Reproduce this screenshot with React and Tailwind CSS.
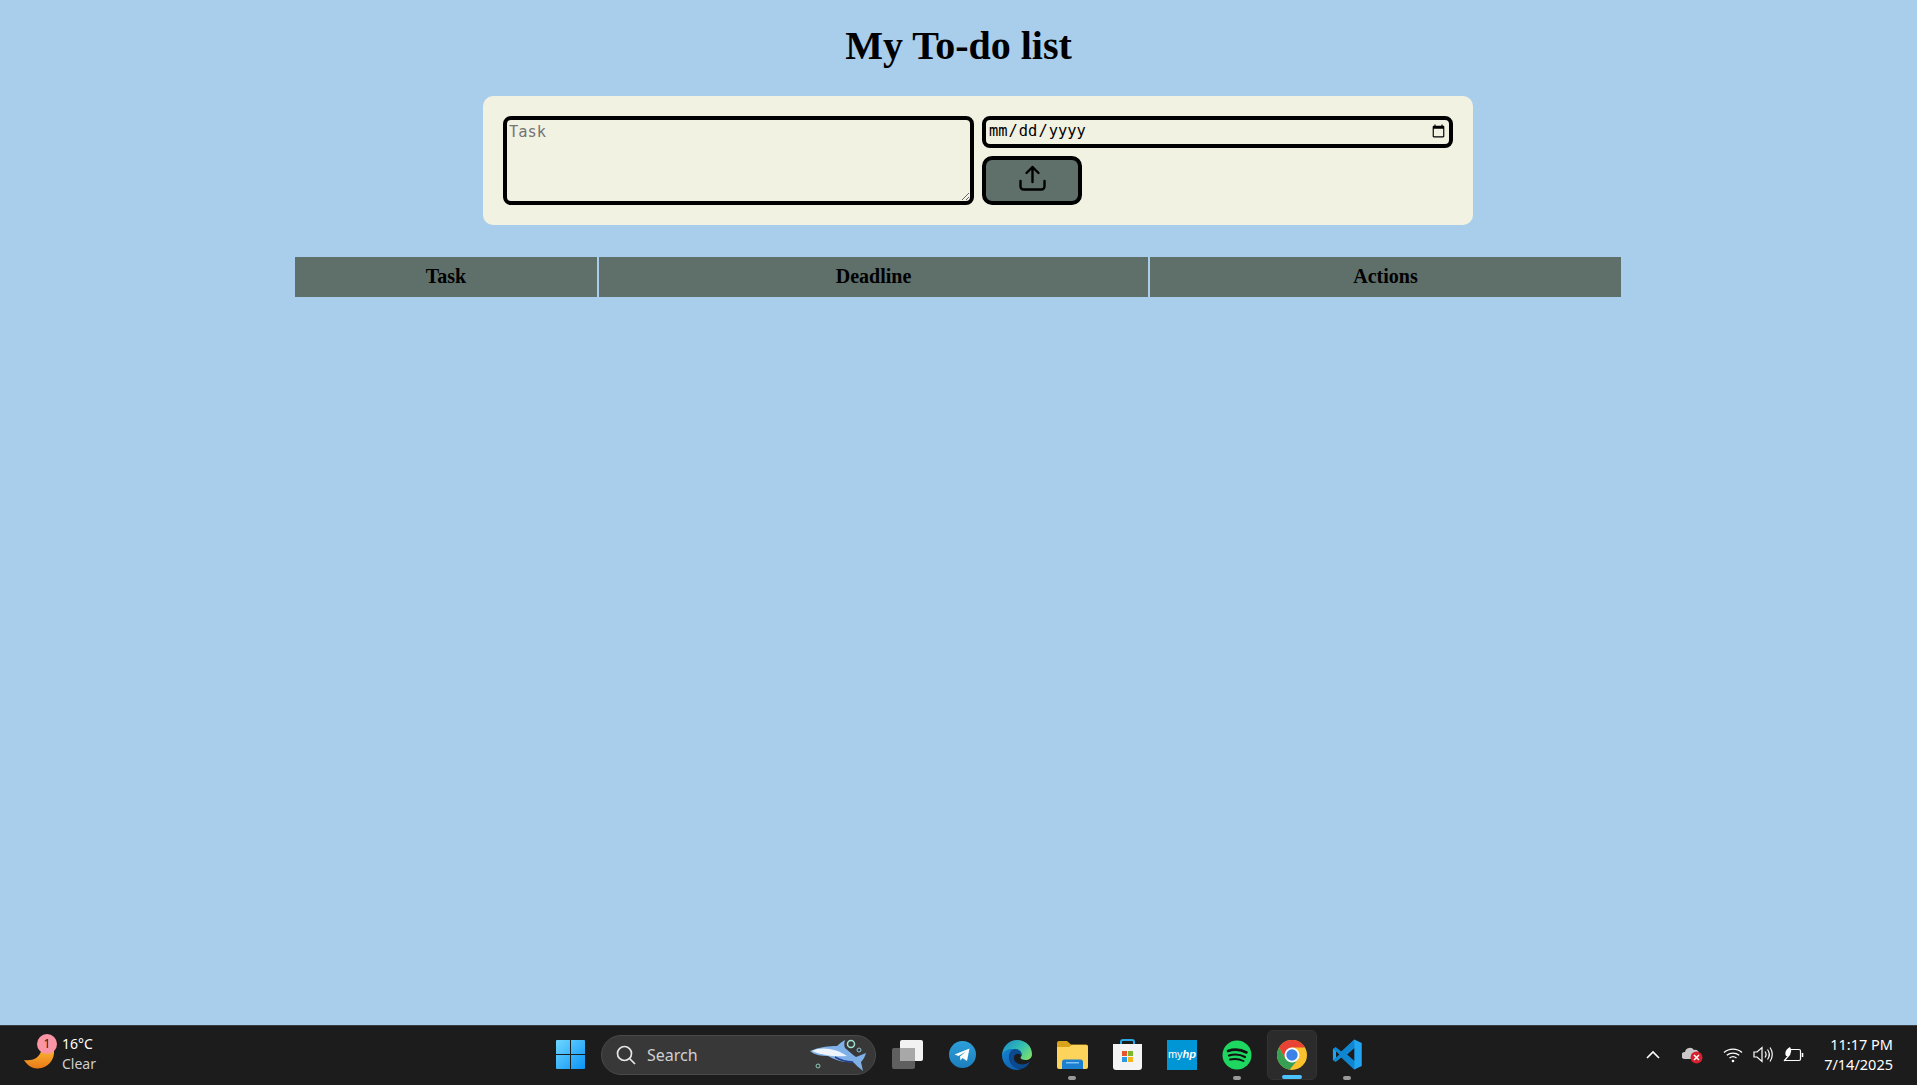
import React from "react";

function WindowsLogo() {
  return (
    <svg width="29" height="29" viewBox="0 0 29 29">
      <defs>
        <linearGradient id="win" x1="0" y1="0" x2="1" y2="1">
          <stop offset="0" stopColor="#6fd6ff" />
          <stop offset="1" stopColor="#0a94f5" />
        </linearGradient>
      </defs>
      <path fill="url(#win)" d="M1 0h13v14H0V1a1 1 0 0 1 1-1zM15 0h13a1 1 0 0 1 1 1v13H15zM0 15h14v14H1a1 1 0 0 1-1-1zM15 15h14v13a1 1 0 0 1-1 1H15z" />
    </svg>
  );
}

function Shark() {
  return (
    <svg width="58" height="34" viewBox="0 0 58 34" fill="none">
      <path d="M1 13 C10 9 20 8 28 8 C31 5 34 3 36 2 C35 5 35 8 36 10 C40 13 44 17 47 19 L57 15 C56 19 54 22 52 24 L54 33 C50 30 46 26 44 24 C36 25 26 22 19 18 C12 18 5 17 1 13Z" fill="#7fb0e8" />
      <path d="M3 13 C12 17 24 19 38 18 C30 12 18 9 8 11Z" fill="#eef4fb" />
      <path d="M26 19 C31 22 38 24 44 24" stroke="#24408f" strokeWidth="1.5" />
      <circle cx="42" cy="6" r="3.5" stroke="#9fe3d0" strokeWidth="1.5" />
      <circle cx="50" cy="12" r="2" stroke="#86c8d8" strokeWidth="1" />
      <circle cx="9" cy="28" r="2" stroke="#8ccfb8" strokeWidth="1" />
    </svg>
  );
}

function TaskView() {
  return (
    <svg width="31" height="29" viewBox="0 0 31 29">
      <rect x="0" y="8" width="23" height="21" rx="2" fill="#5f5f5f" />
      <rect x="8" y="0" width="23" height="21" rx="2" fill="#f2f2f2" />
      <path d="M8 8h15v13H8z" fill="#a8a8a8" />
    </svg>
  );
}

function Telegram() {
  return (
    <svg width="27" height="27" viewBox="0 0 27 27">
      <defs>
        <linearGradient id="tg" x1="0.5" y1="0" x2="0.5" y2="1">
          <stop offset="0" stopColor="#2d9fd9" />
          <stop offset="1" stopColor="#1c7fbe" />
        </linearGradient>
      </defs>
      <circle cx="13.5" cy="13.5" r="13.5" fill="url(#tg)" />
      <path d="M5.5 13.5 L20.5 7.5 L18 20 L13.5 17 L11.5 19.5 L11 15.5 L17 10.5 L9.5 15 Z" fill="#fff" />
    </svg>
  );
}

function Edge() {
  return (
    <svg width="30" height="30" viewBox="0 0 30 30">
      <defs>
        <linearGradient id="edge1" x1="0" y1="0.2" x2="1" y2="0.8">
          <stop offset="0" stopColor="#1a8fc9" />
          <stop offset="0.55" stopColor="#35c1b0" />
          <stop offset="1" stopColor="#7fe06a" />
        </linearGradient>
        <linearGradient id="edge2" x1="0" y1="0" x2="1" y2="1">
          <stop offset="0" stopColor="#1682d4" />
          <stop offset="1" stopColor="#0c59a4" />
        </linearGradient>
      </defs>
      <path d="M15 0 C24 0 30 6.5 30 14 C30 18 27 20 23.5 20 C20.5 20 18.5 19 18.5 17.5 C21 15 19 9.5 13 9.5 C6 9.5 1 14 0 16 C0 7 6.5 0 15 0Z" fill="url(#edge1)" />
      <path d="M0 15 C2 10 7 8.5 12 9 C8 11 6.5 15 7.5 19.5 C8.5 24.5 13 28.5 19 29 C17.5 29.7 16 30 15 30 C6 30 0 23 0 15Z" fill="url(#edge2)" />
      <path d="M12 9 C17 8.5 20.5 12 19.5 16 C18 13.5 15.5 13 13.5 14.5 C11 16.5 11.5 21 15 23 C19 25.5 24.5 24.5 28 21.5 C26 26 22.5 28.5 19 29 C13 28.5 8.5 24.5 7.5 19.5 C6.5 15 8 11 12 9Z" fill="#0b4a8f" />
    </svg>
  );
}

function Folder() {
  return (
    <svg width="31" height="28" viewBox="0 0 31 28">
      <path d="M0 2a2 2 0 0 1 2-2h8l4 3.5h15a2 2 0 0 1 2 2V8H0z" fill="#d9a31c" />
      <path d="M0 6h12l3-2h14a2 2 0 0 1 2 2v20a2 2 0 0 1-2 2H2a2 2 0 0 1-2-2z" fill="#fcd45c" />
      <path d="M5 21a2.5 2.5 0 0 1 2.5-2.5h16A2.5 2.5 0 0 1 26 21v7H5z" fill="#1c7fd0" />
      <rect x="9" y="21" width="13" height="1.5" fill="#7cc4f5" />
    </svg>
  );
}

function Store() {
  return (
    <svg width="29" height="31" viewBox="0 0 29 31">
      <path d="M8 7V3a2 2 0 0 1 2-2h9a2 2 0 0 1 2 2v4" fill="none" stroke="#29a8e6" strokeWidth="2" />
      <path d="M0 5h29v23a3 3 0 0 1-3 3H3a3 3 0 0 1-3-3z" fill="#f4f4f4" />
      <rect x="9" y="12" width="5" height="5" fill="#e8542c" />
      <rect x="15" y="12" width="5" height="5" fill="#7fb72a" />
      <rect x="9" y="18" width="5" height="5" fill="#2a9ae0" />
      <rect x="15" y="18" width="5" height="5" fill="#f7b51c" />
    </svg>
  );
}

function Spotify() {
  return (
    <svg width="30" height="30" viewBox="0 0 30 30" fill="none">
      <circle cx="15" cy="15" r="14.5" fill="#1ed760" />
      <path d="M6 11 C12 9 19 9.5 24.5 12.5" stroke="#111" strokeWidth="2.6" strokeLinecap="round" />
      <path d="M7 15.5 C12 14 18.5 14.5 23 17" stroke="#111" strokeWidth="2.2" strokeLinecap="round" />
      <path d="M8 19.5 C12.5 18.5 17.5 19 21.5 21" stroke="#111" strokeWidth="1.9" strokeLinecap="round" />
    </svg>
  );
}

function Chrome() {
  return (
    <svg width="30" height="30" viewBox="0 0 30 30">
      <circle cx="15" cy="15" r="15" fill="#fbc02d" />
      <path d="M2 7.5 A15 15 0 0 1 28 7.5 L15 7.5 L8.5 18.75 Z" fill="#e94335" />
      <path d="M2 7.5 A15 15 0 0 0 12.6 29.8 L21.5 18.75 L8.5 18.75 Z" fill="#37a052" />
      <circle cx="15" cy="15" r="7.5" fill="#fff" />
      <circle cx="15" cy="15" r="5.7" fill="#3b82e8" />
    </svg>
  );
}

function VsCode() {
  return (
    <svg width="31" height="31" viewBox="0 0 100 100">
      <path d="M72 2 L96 13 V87 L72 98 L30 59 L12 73 L3 68 V32 L12 27 L30 41 Z M72 28 L48 50 L72 72 Z M13 38 V62 L25 50 Z" fill="#22a5f1" fillRule="evenodd" />
      <path d="M72 2 L30 41 L12 27 L3 32 L25 50 L3 68 L12 73 L30 59 L72 98 L72 72 L48 50 L72 28 Z" fill="#0f86d2" />
    </svg>
  );
}

function UploadIcon() {
  return (
    <svg width="27" height="26" viewBox="0 0 27 26" fill="none" stroke="#000" strokeWidth="2.4" strokeLinecap="round" strokeLinejoin="round">
      <path d="M13.5 17V2M7.5 8l6-6 6 6" />
      <path d="M1.5 16v5.5a3 3 0 0 0 3 3h18a3 3 0 0 0 3-3V16" />
    </svg>
  );
}

function TrayIcons() {
  return (
    <div className="flex items-center">
      <svg className="mr-[22px]" width="14" height="9" viewBox="0 0 14 9" fill="none" stroke="#fff" strokeWidth="1.6">
        <path d="M1 8l6-6 6 6" />
      </svg>
      <svg className="mr-[20px]" width="21" height="18" viewBox="0 0 21 18">
        <path d="M3 13a3.5 3.5 0 0 1 0-7 5 5 0 0 1 9-2 4 4 0 0 1 5 5v4z" fill="#c8c8c8" />
        <circle cx="14.5" cy="11.5" r="6" fill="#d8202e" />
        <path d="M12 9l5 5M17 9l-5 5" stroke="#fff" strokeWidth="1.5" />
      </svg>
      <svg className="mr-[10px]" width="20" height="16" viewBox="0 0 20 16" fill="none" stroke="#fff" strokeWidth="1.3">
        <path d="M1 5.5C6 1 14 1 19 5.5M3.8 8.3C7.3 5.3 12.7 5.3 16.2 8.3M6.5 11c2-1.6 5-1.6 7 0" />
        <circle cx="10" cy="14" r="1.3" fill="#fff" stroke="none" />
      </svg>
      <svg className="mr-[9px]" width="21" height="17" viewBox="0 0 21 17" fill="none" stroke="#fff" strokeWidth="1.2">
        <path d="M1 6h3l5-4.5v14L4 11H1z" />
        <path d="M12 5.5c1.3 1.8 1.3 4.2 0 6M14.5 3.5c2.2 3 2.2 7 0 10M17 1.5c3 4 3 10 0 14" />
      </svg>
      <svg width="21" height="17" viewBox="0 0 21 17" fill="none" stroke="#fff" strokeWidth="1.2">
        <path d="M7 3.5h9a1.5 1.5 0 0 1 1.5 1.5v8a1.5 1.5 0 0 1-1.5 1.5H1" />
        <path d="M19.5 7v4" strokeWidth="1.6" />
        <path d="M3 10C1 6 4 2.5 7 1c2 3 1.5 7-2 9z" fill="#fff" stroke="none" />
        <path d="M1 15l6-7" />
      </svg>
    </div>
  );
}

const appIcons = [
  { name: "telegram", icon: <Telegram /> },
  { name: "edge", icon: <Edge /> },
  { name: "explorer", icon: <Folder />, running: true },
  { name: "store", icon: <Store /> },
  {
    name: "myhp",
    icon: (
      <div className="w-[30px] h-[30px] bg-[#0096d6] flex items-center justify-center text-white text-[11px] font-['Liberation_Sans',sans-serif]">
        my<span className="italic font-bold">hp</span>
      </div>
    ),
  },
  { name: "spotify", icon: <Spotify />, running: true },
  { name: "chrome", icon: <Chrome />, active: true },
  { name: "vscode", icon: <VsCode />, running: true },
];

function Taskbar() {
  return (
    <div className="h-[60px] pb-[2px] bg-[#1c1c1c] border-t border-[#3a3d40] flex items-center font-['Noto_Sans',sans-serif] text-white">
      <div className="w-[545px] flex items-center pl-[24px]">
        <div className="relative w-[30px] h-[30px]">
          <svg width="31" height="30" viewBox="0 0 31 30">
            <defs>
              <linearGradient id="moon" x1="0.5" y1="0" x2="0.5" y2="1">
                <stop offset="0" stopColor="#f9b233" />
                <stop offset="1" stopColor="#ea7a16" />
              </linearGradient>
            </defs>
            <path d="M0 20 C8 21 15 19 17.5 10 L30 10 C31 20 24 28 14 28.5 C8 29 3 25 0 20Z" fill="url(#moon)" />
          </svg>
          <span className="absolute -top-[6px] left-[13px] w-[20px] h-[20px] rounded-full bg-[#fb94a4] text-[#1c1c1c] text-[12px] leading-[20px] text-center">1</span>
        </div>
        <div className="ml-[8px] -mt-[1px] text-[14px] leading-[20px]">
          <div>16°C</div>
          <div className="text-[#cfcfcf]">Clear</div>
        </div>
      </div>

      <div className="flex items-center">
        <div className="w-[50px] flex justify-center">
          <WindowsLogo />
        </div>
        <div className="ml-[6px] w-[275px] h-[40px] rounded-full bg-[#383838] border border-[#4a4a4a] flex items-center pl-[14px] pr-[8px]">
          <svg width="20" height="20" viewBox="0 0 20 20" fill="none" stroke="#e6e6e6" strokeWidth="1.7">
            <circle cx="8.5" cy="8.5" r="7" />
            <path d="M13.5 13.5l5.5 5.5" />
          </svg>
          <span className="ml-[11px] text-[16px] text-[#d0d0d0]">Search</span>
          <div className="ml-auto">
            <Shark />
          </div>
        </div>
        <div className="ml-[6px] w-[50px] flex justify-center">
          <TaskView />
        </div>
        <div className="ml-[5px] flex gap-[5px]">
          {appIcons.map((app) => (
            <div
              key={app.name}
              className={
                app.active
                  ? "relative w-[50px] h-[50px] rounded-md bg-[#2b2b2b] border border-[#333] flex items-center justify-center"
                  : "relative w-[50px] h-[50px] flex items-center justify-center"
              }
            >
              {app.icon}
              {app.running && <span className="absolute bottom-0 left-[21px] w-[8px] h-[4px] rounded-full bg-[#9a9a9a]" />}
              {app.active && <span className="absolute bottom-0 left-[14px] w-[20px] h-[4px] rounded-full bg-[#4cc2ff]" />}
            </div>
          ))}
        </div>
      </div>

      <div className="flex-1 flex items-center justify-end pr-[24px]">
        <TrayIcons />
        <div className="ml-[20px] -mt-[2px] text-right text-[14.5px] leading-[20px]">
          <div>11:17 PM</div>
          <div>7/14/2025</div>
        </div>
      </div>
    </div>
  );
}

export default function App() {
  return (
    <div className="min-h-screen flex flex-col bg-[#a9ceec] text-black font-['Liberation_Serif',serif]">
      <div className="flex-1">
        <h1 className="pt-[23px] text-[40px] leading-[46px] font-bold text-center">My To-do list</h1>

        <div className="mt-[27px] ml-[483px] w-[990px] bg-[#f2f2e3] rounded-[10px] p-5 flex gap-[8px]">
          <textarea
            placeholder="Task"
            className="w-[471px] h-[89px] border-4 border-black rounded-lg bg-transparent px-[2px] py-[1px] text-[15.4px] outline-none placeholder:text-[#757575] font-['DejaVu_Sans_Mono',monospace]"
          />
          <div className="w-[471px] flex flex-col gap-2 items-start">
            <input
              type="date"
              className="w-full h-8 border-4 border-black rounded-lg bg-transparent pl-[2px] pr-[1px] text-[15.4px] outline-none font-['DejaVu_Sans_Mono',monospace]"
            />
            <button className="w-[100px] h-[49px] pb-[5px] border-4 border-black rounded-[10px] bg-[#5f6f6a] flex items-center justify-center">
              <UploadIcon />
            </button>
          </div>
        </div>

        <table className="mt-[32px] ml-[293px] w-[1330px] table-fixed border-separate border-spacing-x-[2px] border-spacing-y-0">
          <thead>
            <tr className="h-10 bg-[#5f6f6a] text-[20px] font-bold">
              <th className="w-[302px] pb-[2px] font-bold">Task</th>
              <th className="w-[549px] pb-[2px] font-bold">Deadline</th>
              <th className="w-[471px] pb-[2px] font-bold">Actions</th>
            </tr>
          </thead>
          <tbody />
        </table>
      </div>
      <Taskbar />
    </div>
  );
}
